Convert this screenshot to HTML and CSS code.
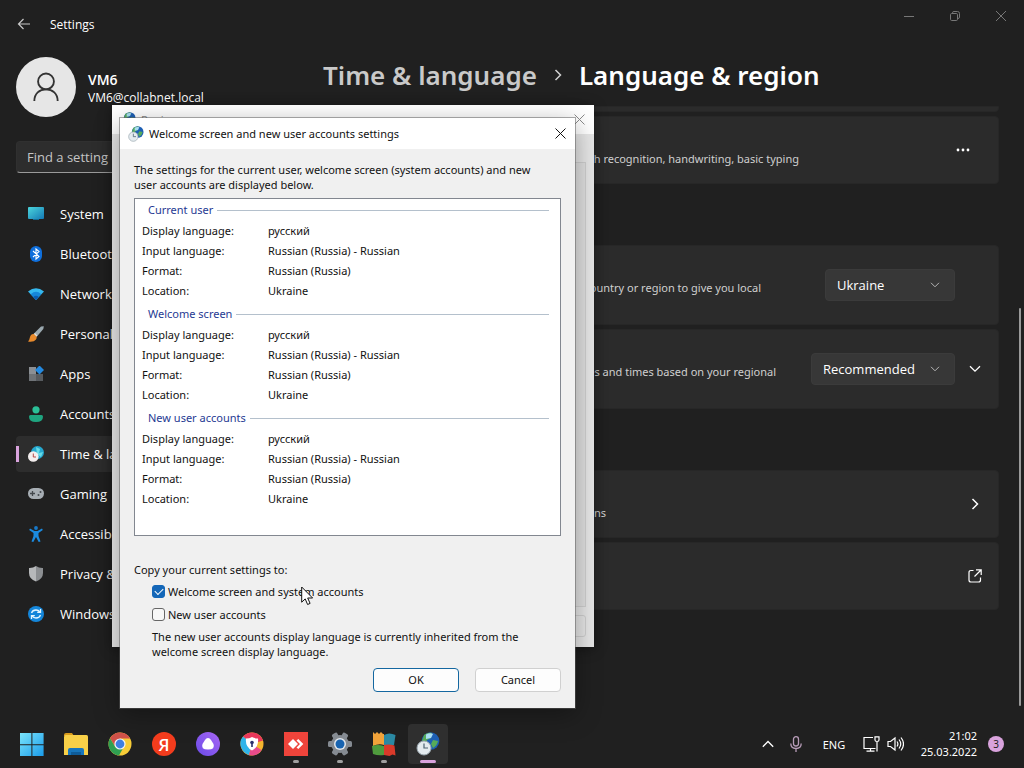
FILE: index.html
```html
<!DOCTYPE html>
<html lang="en">
<head>
  <meta charset="UTF-8">
  <title>Settings</title>
  <meta name="viewport" content="width=device-width, initial-scale=1.0">
  <link rel="stylesheet" href="styles.css">
</head>
<body>

<div class="settings">
  <header class="titlebar">
    <button class="back" aria-label="Back">
      <svg width="14" height="14" viewBox="0 0 14 14" fill="none" stroke="#c8c8c8" stroke-width="1.2"><path d="M13 7H1.5M6.5 2L1.5 7l5 5"/></svg>
    </button>
    <span class="app-name">Settings</span>
    <div class="window-controls">
      <button aria-label="Minimize"><svg width="10" height="10" viewBox="0 0 10 10" stroke="#777" fill="none"><path d="M0 5.5h10"/></svg></button>
      <button aria-label="Restore"><svg width="10" height="10" viewBox="0 0 10 10" stroke="#777" fill="none"><rect x=".5" y="2.5" width="7" height="7" rx="1.2"/><path d="M2.5 2.2V1.8Q2.5.5 4 .5h3.500Q9.500.5 9.500 2.500V6Q9.500 7.500 8 7.500"/></svg></button>
      <button aria-label="Close"><svg width="10" height="10" viewBox="0 0 10 10" stroke="#777" fill="none"><path d="M0 0l10 10M10 0L0 10"/></svg></button>
    </div>
  </header>

  <div class="columns">
    <aside class="sidebar">
      <div class="account">
        <div class="avatar">
          <svg width="28" height="32" viewBox="0 0 30 32" fill="none" stroke="#333" stroke-width="2"><circle cx="15" cy="10" r="8.500"/><path d="M2.500 31C2.500 23 8 18.500 15 18.500S27.500 23 27.500 31"/></svg>
        </div>
        <div class="account-text">
          <strong>VM6</strong>
          <span>VM6@collabnet.local</span>
        </div>
      </div>

      <input class="search" type="text" placeholder="Find a setting" aria-label="Find a setting">

      <nav class="menu">
        <a href="#system">
          <svg width="16" height="16" viewBox="0 0 16 16"><defs><linearGradient id="sys" x1="0" y1="0" x2="1" y2="1"><stop offset="0" stop-color="#4bd5dc"/><stop offset="1" stop-color="#1479b5"/></linearGradient></defs><rect y="1" width="16" height="12" rx="1" fill="url(#sys)"/><path d="M5 13h6v1H5z" fill="#136a92"/></svg>
          System
        </a>
        <a href="#bluetooth">
          <svg width="16" height="16" viewBox="0 0 16 16"><rect x="2" width="12" height="16" rx="6" fill="#0f6fdc"/><path d="M5 5l6 5.500L8 13V3l3 2.500L5 11" fill="none" stroke="#fff" stroke-width="1.100"/></svg>
          Bluetooth
        </a>
        <a href="#network">
          <svg width="16" height="16" viewBox="0 0 16 16"><path d="M0 5.500Q8-1 16 5.500L8 14z" fill="#35b8ee"/><path d="M2.700 8.200Q8 3.500 13.300 8.200L8 14z" fill="#1687d8"/><path d="M5.300 11Q8 8.500 10.700 11L8 14z" fill="#0b5cb0"/></svg>
          Network
        </a>
        <a href="#personalization">
          <svg width="16" height="16" viewBox="0 0 16 16"><path d="M15.800.2L13 .6 5.500 8l3 3 6.800-8z" fill="#9ba9b0"/><path d="M6 8q-3-.5-4 3Q1.500 14 0 15.500q6 .8 8-2 1-1.500.5-3z" fill="#e88a2c"/><path d="M6 8l2.500 2.500.8-1L7 7z" fill="#e6dfd4"/></svg>
          Personal
        </a>
        <a href="#apps">
          <svg width="16" height="16" viewBox="0 0 16 16"><path d="M1 1h7v7H1z" fill="#8b8f94"/><path d="M1 8h7v7H1z" fill="#6f7377"/><path d="M8 8h7v7H8z" fill="#575b5f"/><path d="M11.500-.5L16 4l-4.500 4.500L7 4z" fill="#2389e0"/></svg>
          Apps
        </a>
        <a href="#accounts">
          <svg width="16" height="16" viewBox="0 0 16 16"><circle cx="8" cy="3.800" r="3.600" fill="#2bbf97"/><path d="M1 10.500Q1 9 2.500 9h11q1.500 0 1.500 1.500Q15 16 8 16T1 10.500z" fill="#1fa580"/></svg>
          Accounts
        </a>
        <a href="#time" class="current">
          <svg width="16" height="16" viewBox="0 0 16 16"><circle cx="9.500" cy="6.500" r="6.500" fill="#25a8cf"/><path d="M8 1l4 2-1 4 4-1-2 5-4-3z" fill="#67dbe6"/><circle cx="5.300" cy="10.500" r="5.300" fill="#f3eeee"/><path d="M5.300 7.500V11H8" fill="none" stroke="#b34a4a"/></svg>
          Time &amp; lang
        </a>
        <a href="#gaming">
          <svg width="16" height="16" viewBox="0 0 16 16"><rect y="2" width="16" height="11" rx="5.500" fill="#a7aeb4"/><path d="M4.500 5v5M2 7.500h5" stroke="#43484d" stroke-width="1.300"/><circle cx="10.500" cy="9" r="1" fill="#43484d"/><circle cx="12.500" cy="6" r="1" fill="#43484d"/></svg>
          Gaming
        </a>
        <a href="#accessibility">
          <svg width="16" height="16" viewBox="0 0 16 16"><circle cx="8" cy="2" r="1.900" fill="#1879c9"/><path d="M2 2.500L6.500 5h3L14 2.500l.8 1.500L10.500 7v3l2 5.500-1.800.5L8 11l-2.700 5-1.800-.5 2-5.500V7L1.200 4z" fill="#1b8be0"/></svg>
          Accessibility
        </a>
        <a href="#privacy">
          <svg width="16" height="16" viewBox="0 0 16 16"><path d="M8 0q3 2.200 7 2v5q0 6-7 8.500z" fill="#8c8f92"/><path d="M8 0Q5 2.200 1 2v5q0 6 7 8.500z" fill="#b6b8ba"/></svg>
          Privacy &amp;
        </a>
        <a href="#update">
          <svg width="16" height="16" viewBox="0 0 16 16"><circle cx="8" cy="8" r="8" fill="#1486da"/><path d="M3.500 7Q4.500 4 8 4q2.500 0 4 2.200M12.500 3v3.300H9.200M12.500 9Q11.500 12 8 12q-2.500 0-4-2.200M3.500 13V9.700h3.300" fill="none" stroke="#e5f6ff" stroke-width="1.300"/></svg>
          Windows
        </a>
      </nav>
    </aside>

    <main class="content">
      <h1>
        <a href="#time">Time &amp; language</a>
        <svg width="8" height="12" viewBox="0 0 8 12" fill="none" stroke="#d0d0d0" stroke-width="1.500"><path d="M1.500 1l5 5-5 5"/></svg>
        <span>Language &amp; region</span>
      </h1>

      <div class="cards">
        <section class="card card-cut"></section>
        <section class="card">
          <p class="about">Speech recognition, handwriting, basic typing</p>
          <button class="icon-button" aria-label="More options">
            <svg width="14" height="4" viewBox="0 0 14 4" fill="#fff"><circle cx="2" cy="2" r="1.400"/><circle cx="7" cy="2" r="1.400"/><circle cx="12" cy="2" r="1.400"/></svg>
          </button>
        </section>

        <h2>Region</h2>
        <section class="card card-tall">
          <p class="about about-country">use your country or region to give you local</p>
          <div class="picker">
            <select aria-label="Country or region"><option>Ukraine</option></select>
            <svg width="10" height="6" viewBox="0 0 10 6" fill="none" stroke="#b5b5b5"><path d="M1 .8l4 4 4-4"/></svg>
          </div>
        </section>
        <section class="card card-tall expandable">
          <p class="about about-format">format dates and times based on your regional</p>
          <div class="picker picker-wide">
            <select aria-label="Regional format"><option>Recommended</option></select>
            <svg width="10" height="6" viewBox="0 0 10 6" fill="none" stroke="#b5b5b5"><path d="M1 .8l4 4 4-4"/></svg>
          </div>
          <button class="icon-button" aria-label="Expand">
            <svg width="12" height="8" viewBox="0 0 12 8" fill="none" stroke="#fff" stroke-width="1.300"><path d="M1 1.200l5 5 5-5"/></svg>
          </button>
        </section>

        <h2>Related</h2>
        <section class="card expandable">
          <p class="about about-options">options</p>
          <button class="icon-button" aria-label="Open">
            <svg width="8" height="12" viewBox="0 0 8 12" fill="none" stroke="#fff" stroke-width="1.500"><path d="M1.500 1l5 5-5 5"/></svg>
          </button>
        </section>
        <section class="card expandable">
          <button class="icon-button" aria-label="Open in a new window">
            <svg width="14" height="14" viewBox="0 0 14 14" fill="none" stroke="#fff" stroke-width="1.200"><path d="M5.500 1.500H3q-2 0-2 2V11q0 2 2 2h7.500q2 0 2-2V8.500M8 .8h5.200V6M13 1L6.500 7.500"/></svg>
          </button>
        </section>
      </div>
    </main>
  </div>
  <div class="scroll-thumb"></div>
</div>

<div class="dialog region">
  <div class="dialog-title">
    <svg class="globe" width="16" height="16" viewBox="0 0 24 24"><use href="#globe-clock"/></svg>
    <span>Region</span>
    <button class="close" aria-label="Close"><svg width="11" height="11" viewBox="0 0 11 11" stroke="#8a8a8a" fill="none"><path d="M.5.5l10 10M10.500.5l-10 10"/></svg></button>
  </div>
  <div class="region-body">
    <div class="region-page"></div>
    <div class="region-buttons"></div>
  </div>
</div>

<div class="dialog welcome" role="dialog" aria-labelledby="welcome-title">
  <div class="dialog-title">
    <svg class="globe" width="16" height="16" viewBox="0 0 24 24"><use href="#globe-clock"/></svg>
    <span id="welcome-title">Welcome screen and new user accounts settings</span>
    <button class="close" aria-label="Close"><svg width="11" height="11" viewBox="0 0 11 11" stroke="#111" fill="none"><path d="M.5.5l10 10M10.500.5l-10 10"/></svg></button>
  </div>
  <form class="dialog-body" onsubmit="return false">
    <p>The settings for the current user, welcome screen (system accounts) and new<br>user accounts are displayed below.</p>

    <div class="summary">
      <h3>Current user</h3>
      <dl>
        <dt>Display language:</dt><dd>русский</dd>
        <dt>Input language:</dt><dd>Russian (Russia) - Russian</dd>
        <dt>Format:</dt><dd>Russian (Russia)</dd>
        <dt>Location:</dt><dd>Ukraine</dd>
      </dl>
      <h3>Welcome screen</h3>
      <dl>
        <dt>Display language:</dt><dd>русский</dd>
        <dt>Input language:</dt><dd>Russian (Russia) - Russian</dd>
        <dt>Format:</dt><dd>Russian (Russia)</dd>
        <dt>Location:</dt><dd>Ukraine</dd>
      </dl>
      <h3>New user accounts</h3>
      <dl>
        <dt>Display language:</dt><dd>русский</dd>
        <dt>Input language:</dt><dd>Russian (Russia) - Russian</dd>
        <dt>Format:</dt><dd>Russian (Russia)</dd>
        <dt>Location:</dt><dd>Ukraine</dd>
      </dl>
    </div>

    <p>Copy your current settings to:</p>
    <div class="options">
      <div class="option"><input type="checkbox" id="copy-welcome" checked><label for="copy-welcome">Welcome screen and system accounts</label></div>
      <div class="option"><input type="checkbox" id="copy-new"><label for="copy-new">New user accounts</label></div>
      <p>The new user accounts display language is currently inherited from the<br>welcome screen display language.</p>
    </div>

    <div class="actions">
      <button type="submit" class="default">OK</button>
      <button type="button">Cancel</button>
    </div>
  </form>
</div>

<svg class="cursor" width="13" height="20" viewBox="0 0 13 20"><path d="M.7 1v15.200l3.500-3.300 2.400 5.600 2.500-1.100-2.400-5.400h4.900z" fill="#fff" stroke="#111"/></svg>

<footer class="taskbar">
  <nav class="pinned">
    <a href="#start" aria-label="Start">
      <svg width="24" height="24" viewBox="0 0 24 24"><defs><linearGradient id="win" x1="0" y1="0" x2="1" y2="1"><stop offset="0" stop-color="#7be5fb"/><stop offset="1" stop-color="#1a9bea"/></linearGradient></defs><path d="M0 1h11.400v11.200H0zM12.400 1h11.200v11.200H12.400zM0 13.200h11.400V24H0zM12.400 13.200h11.200V24H12.400z" fill="url(#win)"/></svg>
    </a>
    <a href="#files" aria-label="File Explorer">
      <svg width="26" height="24" viewBox="0 0 26 24"><path d="M1 3q0-2 2-2h6l2 3H1z" fill="#d99b1c"/><path d="M1 5q0-2 2-2h20.500q1.500 0 1.500 1.500V23H1z" fill="#f8d048"/><path d="M5 23v-5q0-2 2-2h12q2 0 2 2v5z" fill="#1776bd"/><path d="M8 20h10v3H8z" fill="#0f5c99"/></svg>
    </a>
    <a href="#chrome" aria-label="Chrome">
      <svg width="24" height="24" viewBox="0 0 24 24"><circle cx="12" cy="12" r="11.500" fill="#f7cc37"/><path d="M12 6.500h10.200Q19 .5 12 .5 5.500.5 2 6.300l5 8z" fill="#cf5148"/><path d="M2 6.300Q-.5 11 1 15.500q3 7.500 10 8l5-9-9 0z" fill="#2f9f51"/><circle cx="12" cy="12" r="5.600" fill="#f5f5f5"/><circle cx="12" cy="12" r="4.400" fill="#3f7fe0"/></svg>
    </a>
    <a href="#yandex" class="yandex" aria-label="Yandex">Я</a>
    <a href="#alice" aria-label="Alice">
      <svg width="24" height="24" viewBox="0 0 24 24"><defs><linearGradient id="alice" x1="0" y1="1" x2="1" y2="0"><stop offset="0" stop-color="#6a4be8"/><stop offset="1" stop-color="#a866f4"/></linearGradient></defs><circle cx="12" cy="12" r="12" fill="url(#alice)"/><path d="M12 6q1.800 0 3 2l2.500 4Q19.500 17.500 12 17.500T6.500 12L9 8q1.200-2 3-2z" fill="#fff"/></svg>
    </a>
    <a href="#secure" aria-label="Secure browser">
      <svg width="24" height="24" viewBox="0 0 24 24"><circle cx="12" cy="12" r="11.500" fill="#f5b52e"/><path d="M12 12L3 4.500Q7 .5 12 .5q8 0 11 8z" fill="#e9375b"/><path d="M12 12L3 4.500Q-1 9 1 15q2 6 8 8z" fill="#2fb4ea"/><path d="M12 12l-3 11q8 2 12.500-5z" fill="#e94b8b"/><path d="M12 5q2.500 1.500 6 1.500 1 8.500-6 12-7-3.500-6-12 3.500 0 6-1.500z" fill="#fff"/><circle cx="12" cy="10.500" r="1.800" fill="#2b2f6b"/><path d="M11.200 11h1.600v4h-1.600z" fill="#2b2f6b"/></svg>
    </a>
    <a href="#anydesk" class="running" aria-label="AnyDesk">
      <svg width="24" height="24" viewBox="0 0 24 24"><path d="M0 0h24v24H0z" fill="#ef443b"/><path d="M9 7l5 5-5 5-5-5z" fill="#fff"/><path d="M12.500 8.500L14.300 7l5 5-5 5-1.800-1.500L16 12z" fill="#fff"/></svg>
    </a>
    <a href="#settings" class="running" aria-label="Settings">
      <svg width="24" height="24" viewBox="0 0 24 24"><g fill="#858b92"><circle cx="12" cy="12" r="9"/><rect x="9" y="0" width="6" height="24" rx="1.500" transform="rotate(30 12 12)"/><rect x="9" y="0" width="6" height="24" rx="1.500" transform="rotate(90 12 12)"/><rect x="9" y="0" width="6" height="24" rx="1.500" transform="rotate(150 12 12)"/></g><circle cx="12" cy="12" r="6" fill="#e4e8ec"/><circle cx="12" cy="12" r="4.500" fill="#1763b0"/></svg>
    </a>
    <a href="#avg" class="running" aria-label="AVG">
      <svg width="24" height="24" viewBox="0 0 24 24"><path d="M1 0l2 2 2-2 2 2 2-2 2 2h1v11q-5-2-11 1z" fill="#f1a33a"/><path d="M12 3q5-3 11.500 0L22 13q-5 1.500-10 0z" fill="#2b89a3"/><path d="M0 14q6-2 12 0v9Q6 24 1 22z" fill="#4f9b3d"/><path d="M12 13q5-1 10.500.5l1 10-3-1-3 1.500-5.500-1z" fill="#d93a2a"/></svg>
    </a>
    <a href="#region" class="running active" aria-label="Region">
      <svg width="24" height="24" viewBox="0 0 24 24"><g id="globe-clock"><circle cx="14.500" cy="9" r="8.800" fill="#1d5fb4"/><path d="M8 3q4-3 8-2l-1 5-4 2-1 4-4-3zM17 8l5 1q-1 5-5 7l-2-4z" fill="#57ab5a"/><path d="M10 2.500q4-2 7-.5l-2 4-5 1z" fill="#a9def5"/><circle cx="8" cy="16" r="7" fill="#e4ebef" stroke="#9aa7af"/><path d="M8 11.500V16h4" fill="none" stroke="#4d6370" stroke-width="1.200"/></g></svg>
    </a>
  </nav>

  <div class="tray">
    <button aria-label="Show hidden icons"><svg width="12" height="8" viewBox="0 0 12 8" fill="none" stroke="#fff" stroke-width="1.300"><path d="M.8 6.800L6 1.500l5.200 5.300"/></svg></button>
    <button aria-label="Microphone"><svg width="12" height="16" viewBox="0 0 12 16" fill="none" stroke="#b79cb8" stroke-width="1.300"><rect x="3.500" y=".7" width="5" height="9.300" rx="2.500"/><path d="M.8 7.500q0 5 5.200 5t5.200-5M6 12.500V16"/></svg></button>
    <button class="lang">ENG</button>
    <button class="network" aria-label="Network and sound">
      <svg width="17" height="16" viewBox="0 0 17 16" fill="none" stroke="#fff" stroke-width="1.200"><path d="M10 1.500H1v11h11.500M3.500 15.200h8M7.500 12.500v2.700M14 5.500v10M12 .8h4V4q0 1.500-2 1.500T12 4z"/></svg>
      <svg width="17" height="16" viewBox="0 0 17 16" fill="none" stroke="#fff" stroke-width="1.200"><path d="M1 5.500h2.500L8 2v12L3.500 10.500H1zM10 5.500q1.800 2.500 0 5M12 3.500q3.500 4.500 0 9M14 1.500q5 6.500 0 13"/></svg>
    </button>
    <div class="clock"><time>21:02</time><time>25.03.2022</time></div>
    <span class="badge">3</span>
  </div>
</footer>

</body>
</html>
```

FILE: styles.css
```css
* {
  box-sizing: border-box;
}
body {
  font-family: "Open Sans", "Noto Sans", sans-serif;
  margin: 0;
  min-height: 100vh;
  display: flex;
  flex-direction: column;
  background-color: #202020;
  color: #fff;
  font-size: 13px;
  overflow: hidden;
}
button, input, select {
  font: inherit;
  color: inherit;
}
button {
  background: none;
  border: none;
  padding: 0;
}
p, h1, h2, h3, dl, dd {
  margin: 0;
}
a {
  color: inherit;
  text-decoration: none;
}
svg {
  display: block;
  flex-shrink: 0;
}

/* settings window */
.settings {
  position: relative;
  flex: 1;
}
.titlebar {
  display: flex;
  align-items: center;
  height: 48px;
  padding-left: 16px;
  font-size: 12px;
}
.back {
  width: 34px;
  padding-left: 1px;
}
.window-controls {
  display: flex;
  align-self: flex-start;
  margin-left: auto;
}
.window-controls button {
  width: 46px;
  height: 32px;
  display: flex;
  align-items: center;
  justify-content: center;
}
.columns {
  display: flex;
}
.sidebar {
  width: 323px;
  padding: 9px 16px 0;
}
.account {
  display: flex;
  align-items: center;
  gap: 12px;
}
.avatar {
  display: flex;
  align-items: center;
  justify-content: center;
  width: 60px;
  height: 60px;
  border-radius: 50%;
  background-color: #e6e6e6;
}
.account-text {
  display: flex;
  flex-direction: column;
  font-size: 12px;
  line-height: 18px;
  padding-top: 4px;
}
.account-text strong {
  font-size: 14px;
  font-weight: 600;
}
.search {
  display: block;
  width: 100%;
  height: 32px;
  margin: 24px 0 23px;
  padding: 0 10px;
  background-color: #2d2d2d;
  border: 1px solid #303030;
  border-bottom-color: #9a9a9a;
  border-radius: 4px;
}
.search::placeholder {
  color: #c5c5c5;
  opacity: 1;
}
.menu {
  display: flex;
  flex-direction: column;
  gap: 4px;
}
.menu a {
  display: flex;
  align-items: center;
  gap: 16px;
  height: 36px;
  padding-left: 12px;
  border-radius: 4px;
}
.menu .current {
  background: linear-gradient(#d9a3dd, #d9a3dd) left / 3px 16px no-repeat #2d2d2d;
}
.content {
  flex: 1;
  padding-right: 25px;
}
h1 {
  display: flex;
  align-items: center;
  gap: 17px;
  height: 58px;
  padding-bottom: 4px;
  font-family: "Noto Sans", sans-serif;
  font-size: 26px;
  font-weight: 600;
}
h1 a {
  color: #c9c9c9;
}
.cards {
  display: flex;
  flex-direction: column;
  gap: 4px;
}
h2 {
  font-size: 13px;
  font-weight: 600;
  line-height: 17px;
  padding: 20px 0 16px;
}
.card {
  display: flex;
  align-items: center;
  min-height: 68px;
  padding-right: 20px;
  background-color: #2b2b2b;
  border: 1px solid #272727;
  border-radius: 4px;
}
.card-cut {
  min-height: 6px;
  border-radius: 0 0 4px 4px;
}
.card-tall {
  min-height: 80px;
  padding-right: 43px;
}
.card.expandable {
  padding-right: 8px;
}
.about {
  width: 475px;
  padding-top: 18px;
  text-align: right;
  color: #cfcfcf;
  font-family: "Noto Sans", sans-serif;
  font-size: 11px;
  line-height: 16px;
}
.card-tall .about {
  padding-top: 6px;
}
.about-country {
  width: 437px;
}
.about-format {
  width: 452px;
}
.about-options {
  width: 282px;
}
.icon-button {
  display: flex;
  align-items: center;
  justify-content: center;
  width: 30px;
  height: 32px;
  margin-left: auto;
}
.picker {
  display: flex;
  align-items: center;
  position: relative;
  width: 130px;
  margin-left: auto;
}
.picker-wide {
  width: 144px;
}
.picker-wide + .icon-button {
  margin-left: 5px;
}
.picker select {
  appearance: none;
  width: 100%;
  height: 32px;
  padding: 0 11px;
  background-color: #373737;
  border: 1px solid #3b3b3b;
  border-radius: 4px;
}
.picker svg {
  position: absolute;
  right: 15px;
  pointer-events: none;
}
.scroll-thumb {
  position: absolute;
  right: 3px;
  top: 308px;
  bottom: 14px;
  width: 2px;
  border-radius: 1px;
  background-color: #9a9a9a;
}

/* dialogs */
.dialog {
  position: absolute;
  display: flex;
  flex-direction: column;
  background-color: #f0f0f0;
  color: #111;
  font-family: "Noto Sans", sans-serif;
  font-size: 11px;
  line-height: 15px;
}
.dialog-title {
  display: flex;
  align-items: center;
  gap: 5px;
  height: 31px;
  padding-left: 8px;
  background-color: #fff;
}
.close {
  display: flex;
  align-items: center;
  justify-content: center;
  width: 30px;
  height: 28px;
  margin-left: auto;
}
.region {
  left: 112px;
  top: 105px;
  width: 482px;
  height: 542px;
  background-color: #e6e6e6;
  color: #888;
  box-shadow: 0 2px 12px rgba(0, 0, 0, 0.4);
}
.region .dialog-title {
  height: 29px;
}
.region-body {
  display: flex;
  flex-direction: column;
  flex: 1;
  gap: 8px;
  padding: 28px 8px 10px;
}
.region-page {
  flex: 1;
  background-color: #e0e0e0;
  border: 1px solid #cfcfcf;
}
.region-buttons {
  height: 22px;
  border: 1px solid #cfcfcf;
  border-radius: 3px;
}
.welcome {
  left: 120px;
  top: 118px;
  width: 455px;
  outline: 1px solid rgba(90, 90, 90, 0.5);
  box-shadow: 0 6px 24px rgba(0, 0, 0, 0.35);
}
.dialog-body {
  padding: 13px 14px 16px;
}
.summary {
  margin: 6px 0 26px;
  padding: 0 11px 24px 7px;
  background-color: #fff;
  border: 1px solid #828790;
}
h3 {
  display: flex;
  align-items: center;
  gap: 4px;
  padding-left: 6px;
  color: #1f3a93;
  font-size: 11px;
  font-weight: 400;
  line-height: 22px;
}
h3::after {
  content: "";
  flex: 1;
  height: 1px;
  background-color: #b4c0cc;
}
dl {
  display: grid;
  grid-template-columns: 126px 1fr;
  line-height: 20px;
  padding-bottom: 2px;
}
.options {
  padding: 3px 0 9px 18px;
}
.options p {
  margin-top: 3px;
}
.option {
  display: flex;
  align-items: center;
  gap: 3px;
  height: 23px;
}
.option input {
  appearance: none;
  width: 13px;
  height: 13px;
  margin: 0;
  background-color: #f7f7f7;
  border: 1px solid #666;
  border-radius: 3px;
}
.option input:checked {
  background-color: #1467b8;
  border-color: #1467b8;
}
.option input:checked::after {
  content: "";
  display: block;
  width: 7px;
  height: 4px;
  margin: 2px;
  border: solid #fff;
  border-width: 0 0 1px 1px;
  transform: rotate(-45deg);
}
.actions {
  display: flex;
  justify-content: flex-end;
  gap: 16px;
}
.actions button {
  width: 86px;
  height: 24px;
  padding-bottom: 2px;
  background-color: #fdfdfd;
  border: 1px solid #d0d0d0;
  border-radius: 4px;
}
.actions .default {
  border-color: #1467a0;
}
.cursor {
  position: absolute;
  left: 301px;
  top: 586px;
}

/* taskbar */
.taskbar {
  display: flex;
  justify-content: space-between;
  height: 48px;
  padding: 0 20px 0 10px;
}
.pinned {
  display: flex;
  align-items: center;
}
.pinned a {
  display: flex;
  align-items: center;
  justify-content: center;
  position: relative;
  width: 44px;
  height: 40px;
}
.yandex::before {
  content: "";
  position: absolute;
  width: 24px;
  height: 24px;
  border-radius: 50%;
  background-color: #f33c1d;
  z-index: -1;
}
.yandex {
  z-index: 0;
  font-size: 17px;
  font-weight: 600;
}
.running::after {
  content: "";
  position: absolute;
  bottom: 1px;
  width: 6px;
  height: 3px;
  border-radius: 2px;
  background-color: #a0a0a0;
}
.pinned .active {
  width: 40px;
  margin-left: 2px;
  background-color: #2f2f2f;
  border-radius: 4px;
}
.active::after {
  width: 16px;
  background-color: #d9a3dd;
}
.tray {
  display: flex;
  align-items: center;
  font-family: "Noto Sans", sans-serif;
  font-size: 11px;
}
.tray button {
  display: flex;
  align-items: center;
  justify-content: center;
  width: 28px;
}
.tray .lang {
  width: 48px;
}
.tray .network {
  width: 53px;
  gap: 7px;
  padding-right: 2px;
}
.clock {
  display: flex;
  flex-direction: column;
  width: 66px;
  text-align: right;
  line-height: 16px;
}
.badge {
  width: 16px;
  height: 16px;
  margin-left: 11px;
  border-radius: 50%;
  background-color: #d9a3dd;
  color: #222;
  font-size: 10px;
  line-height: 16px;
  text-align: center;
}
```
